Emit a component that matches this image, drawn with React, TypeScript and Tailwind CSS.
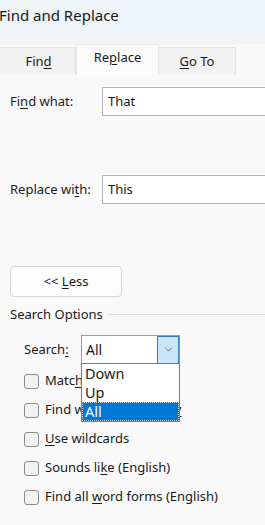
import { ChevronDown } from 'lucide-react';

const font = { fontFamily: '"Noto Sans", "Open Sans", sans-serif' };

function U({ children }: { children: React.ReactNode }) {
  return <span className="underline underline-offset-2 decoration-1">{children}</span>;
}

function Check({ children }: { children: React.ReactNode }) {
  return (
    <div className="flex h-[29px] items-center gap-[6px] pl-[24px]">
      <span className="h-[15px] w-[15px] shrink-0 rounded-[3px] border border-[#8a8a8a] bg-[#f2f2f2]" />
      <span className="whitespace-nowrap">{children}</span>
    </div>
  );
}

export default function App() {
  return (
    <div style={font} className="relative h-[525px] w-[265px] overflow-hidden bg-[#f9f9f9] text-[13px] text-[#1a1a1a]">
      <div className="flex h-[44px] items-center whitespace-nowrap bg-[#eef4f8] pb-[13px] text-[15px] -indent-[1px]">Find and Replace</div>

      <div className="flex h-[31px] items-end bg-[#f9f9f9]">
        <div className="-ml-px flex h-[28px] w-[77px] shrink-0 items-center justify-center border border-b-0 border-[#e3e3e3] bg-[#f2f2f2] pl-[2px]">
          Fin<U>d</U>
        </div>
        <div className="flex h-[31px] w-[83px] shrink-0 items-center justify-center border border-b-0 border-[#e8e8e8] bg-[#fbfbfb] pb-[4px]">
          Re<U>p</U>lace
        </div>
        <div className="flex h-[28px] w-[77px] shrink-0 items-center justify-center border border-b-0 border-l-0 border-[#e3e3e3] bg-[#f2f2f2]">
          <U>G</U>o To
        </div>
      </div>

      <div className="mt-[12px] flex items-center">
        <span className="w-[102px] shrink-0 whitespace-nowrap pl-[10px]">Fi<U>n</U>d what:</span>
        <div className="h-[29px] w-[200px] shrink-0 border border-[#b5b5b5] bg-white pl-[5px] leading-[26px]">That</div>
      </div>

      <div className="mt-[59px] flex items-center">
        <span className="w-[102px] shrink-0 whitespace-nowrap pl-[10px]">Replace wi<U>t</U>h:</span>
        <div className="h-[29px] w-[200px] shrink-0 border border-[#b5b5b5] bg-white pl-[5px] leading-[26px]">This</div>
      </div>

      <div className="ml-[10px] mt-[62px] flex h-[31px] w-[112px] items-center justify-center rounded-[4px] border border-[#d6d6d6] bg-[#fdfdfd]">
        &lt;&lt;&nbsp;<U>L</U>ess
      </div>

      <div className="mt-[8px] flex items-center gap-[5px] pl-[10px]">
        <span className="whitespace-nowrap">Search Options</span>
        <span className="h-px flex-1 bg-[#dcdcdc]" />
      </div>

      <div className="mt-[10px] flex items-center">
        <span className="w-[81px] shrink-0 whitespace-nowrap pl-[24px]">Search<U>:</U></span>
        <div className="flex h-[30px] w-[99px] shrink-0 items-center border border-[#9a9a9a] bg-white pl-[4px] text-[14px]">
          <span className="flex-1">All</span>
          <span className="flex h-[28px] w-[22px] items-center justify-center border border-[#3a7ac0] bg-[#cce4f7]">
            <ChevronDown size={13} strokeWidth={1.2} className="text-[#333]" />
          </span>
        </div>
      </div>

      <div className="pt-[2px]">
        <Check>
          Matc<U>h</U> case
        </Check>
        <Check>
          Find whole words onl<U>y</U>
        </Check>
        <Check>
          <U>U</U>se wildcards
        </Check>
        <Check>
          Sounds li<U>k</U>e (English)
        </Check>
        <Check>
          Find all <U>w</U>ord forms (English)
        </Check>
      </div>

      <div className="absolute left-[81px] top-[363px] flex w-[99px] flex-col border border-[#7a7a7a] bg-white text-[14.5px]">
        <span className="h-[19px] pl-[3px] leading-[19px]">Down</span>
        <span className="h-[19px] pl-[3px] leading-[19px]">Up</span>
        <span className="h-[19px] border border-dotted border-[#c9d8ea] bg-[#0078d7] pl-[2px] leading-[17px] text-white">All</span>
      </div>
    </div>
  );
}
